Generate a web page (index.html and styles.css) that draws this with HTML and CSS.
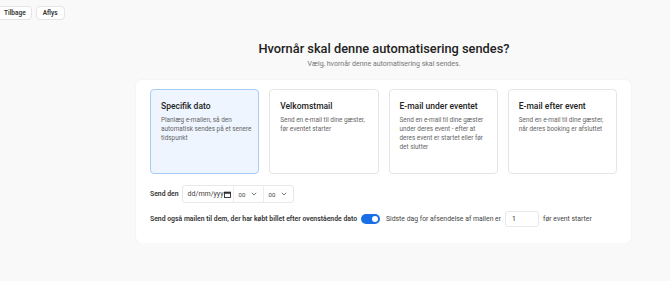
FILE: index.html
```html
<!DOCTYPE html>
<html lang="da">

<head>
  <meta charset="UTF-8">
  <meta name="viewport" content="width=device-width, initial-scale=1.0">
  <title>Automatisering</title>
  <link rel="stylesheet" href="styles.css">
</head>

<body>
  <div class="topbar">
    <button class="btn back">Tilbage</button>
    <button class="btn">Aflys</button>
  </div>

  <div class="heading">
    <h1>Hvornår skal denne automatisering sendes?</h1>
    <p>Vælg, hvornår denne automatisering skal sendes.</p>
  </div>

  <div class="panel">
    <div class="cards">
      <div class="card selected">
        <h2>Specifik dato</h2>
        <p>Planlæg e-mailen, så den automatisk sendes på et senere tidspunkt</p>
      </div>
      <div class="card">
        <h2>Velkomstmail</h2>
        <p>Send en e-mail til dine gæster, før eventet starter</p>
      </div>
      <div class="card">
        <h2>E-mail under eventet</h2>
        <p>Send en e-mail til dine gæster under deres event - efter at deres event er startet eller før det slutter</p>
      </div>
      <div class="card">
        <h2>E-mail efter event</h2>
        <p>Send en e-mail til dine gæster, når deres booking er afsluttet</p>
      </div>
    </div>

    <div class="row first">
      <span class="label">Send den</span>
      <div class="datetime">
        <span class="date">dd/mm/yyy<svg width="7" height="7" viewBox="0 0 8 8"><rect x="0.6" y="1.3" width="6.8" height="6.1" fill="none" stroke="#222" stroke-width="1"/><rect x="0.6" y="1.3" width="6.8" height="1.8" fill="#222"/></svg></span>
        <span class="select">00<svg width="6" height="4" viewBox="0 0 6 4"><path d="M0.8 0.8 L3 3 L5.2 0.8" fill="none" stroke="#666" stroke-width="0.9"/></svg></span>
        <span class="select">00<svg width="6" height="4" viewBox="0 0 6 4"><path d="M0.8 0.8 L3 3 L5.2 0.8" fill="none" stroke="#666" stroke-width="0.9"/></svg></span>
      </div>
    </div>

    <div class="row">
      <span class="label">Send også mailen til dem, der har købt billet efter ovenstående dato</span>
      <span class="toggle"><span class="knob"></span></span>
      <span class="text">Sidste dag for afsendelse af mailen er</span>
      <span class="number">1</span>
      <span class="text">før event starter</span>
    </div>
  </div>
</body>

</html>
```

FILE: styles.css
```css
/* Grundlæggende side */
body {
  margin: 0;
  background-color: #f9f9f9;
  color: #222;
  font-family: Roboto, "Liberation Sans", sans-serif;
}

/* Knapper øverst */
.topbar {
  display: flex;
  gap: 4px;
  padding-top: 6px;
}

.btn {
  background-color: white;
  border: 1px solid #e4e4e4;
  border-radius: 4px;
  height: 14px;
  padding: 0 6px;
  font-family: inherit;
  font-size: 6.5px;
  font-weight: 600;
  color: #333;
}

/* Tilbage-knappen stikker lidt ud over venstre kant */
.btn.back {
  margin-left: -4px;
  padding: 0 5px 0 7px;
}

/* Overskrift */
.heading {
  text-align: center;
  padding-left: 98px;
  margin-top: 21px;
}

.heading h1 {
  margin: 0;
  font-size: 12.8px;
  font-weight: 500;
  line-height: 16px;
  color: #222;
}

.heading p {
  margin: 3px 0 0;
  font-size: 7px;
  color: #777;
}

/* Hvid boks med indhold */
.panel {
  background-color: white;
  margin: 12px 39px 0 136px;
  padding: 9px 14px 16px;
  border-radius: 6px;
  box-shadow: 0 0 3px rgba(0, 0, 0, 0.05);
}

.cards {
  display: flex;
  gap: 10px;
}

.card {
  flex: 1;
  height: 85px;
  box-sizing: border-box;
  border: 1px solid #e5e5e5;
  border-radius: 4px;
  padding: 10px 4px 10px 10px;
}

.card.selected {
  background-color: #eef5ff;
  border-color: #a8ccfa;
}

.card h2 {
  margin: 0 0 4px;
  font-size: 8.5px;
  font-weight: 500;
  line-height: 12px;
  color: #222;
}

.card p {
  margin: 0;
  font-size: 6.4px;
  line-height: 9px;
  color: #666;
}

/* Rækker under kortene */
.row {
  display: flex;
  align-items: center;
  gap: 4px;
  font-size: 6.85px;
  margin-top: 8px;
}

.row.first {
  margin-top: 11px;
}

.label {
  font-weight: 600;
  color: #333;
}

.datetime {
  display: flex;
  height: 16px;
  border: 1px solid #e8e8e8;
  border-radius: 3px;
  margin-left: -1px;
}

.date,
.select {
  display: flex;
  align-items: center;
  box-sizing: border-box;
  color: #444;
}

.date {
  width: 50px;
  padding-left: 5px;
  font-size: 7px;
}

.select {
  width: 30px;
  border-left: 1px solid #ededed;
  padding-left: 5px;
  gap: 6px;
  font-size: 6px;
}

.toggle {
  width: 19px;
  height: 10px;
  border-radius: 5px;
  background-color: #1a6fe6;
  position: relative;
  margin-right: 2px;
}

.knob {
  position: absolute;
  right: 2px;
  top: 2px;
  width: 6px;
  height: 6px;
  border-radius: 50%;
  background-color: white;
}

.text {
  color: #444;
}

.number {
  width: 34px;
  height: 16px;
  box-sizing: border-box;
  border: 1px solid #e8e8e8;
  border-radius: 3px;
  padding: 0 6px;
  display: flex;
  align-items: center;
  color: #333;
}
```
